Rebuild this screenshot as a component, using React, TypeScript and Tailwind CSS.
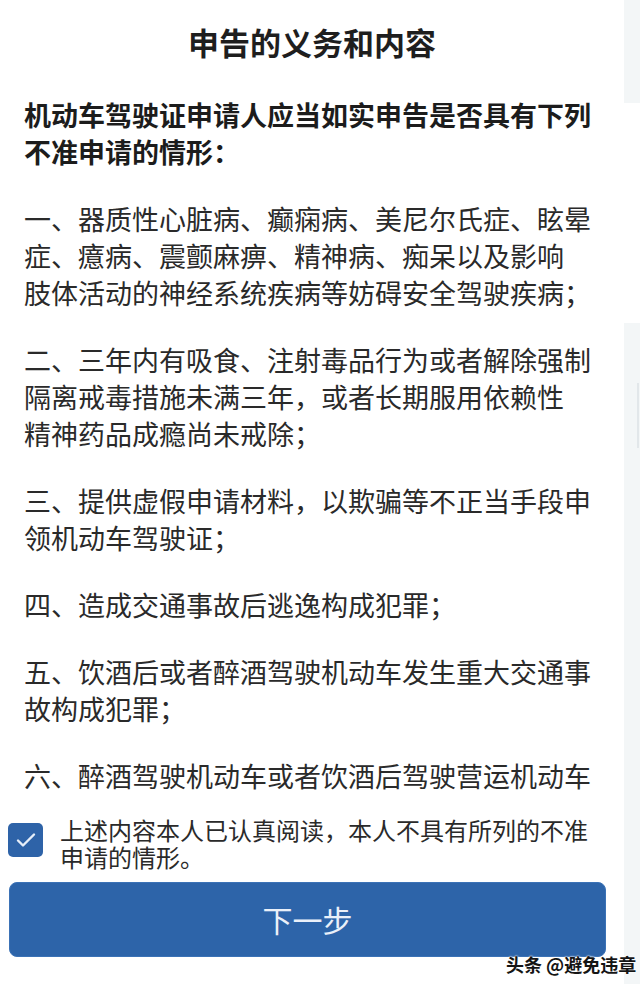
import React from 'react'

const paragraphs: string[][] = [
    ['一、器质性心脏病、癫痫病、美尼尔氏症、眩晕', '症、癔病、震颤麻痹、精神病、痴呆以及影响', '肢体活动的神经系统疾病等妨碍安全驾驶疾病；'],
    ['二、三年内有吸食、注射毒品行为或者解除强制', '隔离戒毒措施未满三年，或者长期服用依赖性', '精神药品成瘾尚未戒除；'],
    ['三、提供虚假申请材料，以欺骗等不正当手段申', '领机动车驾驶证；'],
    ['四、造成交通事故后逃逸构成犯罪；'],
    ['五、饮酒后或者醉酒驾驶机动车发生重大交通事', '故构成犯罪；'],
    ['六、醉酒驾驶机动车或者饮酒后驾驶营运机动车'],
]

function Lines({ lines }: { lines: string[] }) {
    return (
        <div>
            {lines.map((line) => (
                <div key={line} className="whitespace-nowrap">{line}</div>
            ))}
        </div>
    )
}

export default function App() {
    return (
        <div className="relative flex w-[640px] h-[984px] overflow-hidden bg-white font-['Noto_Sans_CJK_SC','Noto_Sans',sans-serif]">
            <div className="w-[624px] flex flex-col">
                <div className="h-[800px] overflow-hidden px-[24px] pt-[20px]">
                    <h1 className="text-center text-[31px] leading-[44px] font-bold text-[#1e1e1e]">申告的义务和内容</h1>
                    <div className="mt-[32px] flex flex-col gap-[30px] text-[27px] leading-[37px] text-[#2a2a2a]">
                        <div className="font-bold text-[#1c1c1c]">
                            <Lines lines={['机动车驾驶证申请人应当如实申告是否具有下列', '不准申请的情形：']} />
                        </div>
                        {paragraphs.map((p) => (
                            <Lines key={p[0]} lines={p} />
                        ))}
                    </div>
                </div>

                <label className="mt-[16px] flex items-start gap-[17px] pl-[8px] cursor-pointer">
                    <span className="mt-[7px] flex h-[34px] w-[35px] shrink-0 items-center justify-center rounded-[5px] bg-[#2e63a8]">
                        <svg width="22" height="18" viewBox="0 0 22 18" fill="none">
                            <path d="M3 9.5l5 5L19 3.5" stroke="#e6eef9" strokeWidth="2.4" strokeLinecap="round" strokeLinejoin="round" />
                        </svg>
                    </span>
                    <span className="text-[24px] leading-[27px] text-[#2a2a2a]">
                        上述内容本人已认真阅读，本人不具有所列的不准<br />申请的情形。
                    </span>
                </label>

                <button className="mt-[12px] ml-[9px] h-[75px] w-[597px] rounded-[8px] bg-[#2d64a9] border border-[#3b72b6] text-[30px] text-[#eaf0f9]">
                    下一步
                </button>
            </div>

            {/* sliver of the neighbouring page */}
            <div className="flex w-[16px] flex-col">
                <div className="h-[103px] bg-[#f3f6f7]" />
                <div className="h-[220px] bg-white" />
                <div className="relative flex-1 bg-[#f3f6f7]">
                    <div className="absolute left-[13px] top-[60px] h-[65px] w-[2px] bg-[#e2e7ea]" />
                </div>
            </div>

            <div className="absolute left-[506px] top-[952px] whitespace-nowrap text-[18px] leading-[24px] font-bold text-[#151515] [text-shadow:0_0_2px_#fff,0_0_2px_#fff]">
                头条 @避免违章
            </div>
        </div>
    )
}
